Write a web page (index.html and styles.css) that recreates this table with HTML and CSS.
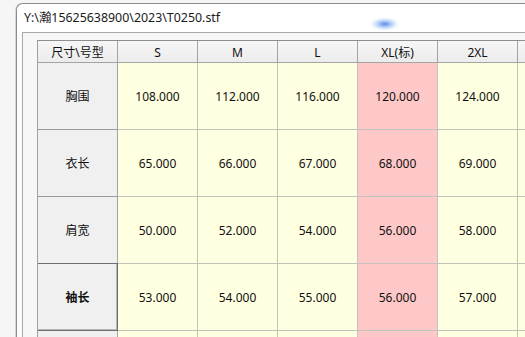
FILE: index.html
```html
<!DOCTYPE html>
<html>
<head>
<meta charset="utf-8">
<link rel="stylesheet" href="styles.css">
</head>
<body>
<div class="desktop">
  <div class="window">
    <div class="titlebar">Y:\瀚15625638900\2023\T0250.stf<span class="glow"></span></div>
    <div class="client">
      <div class="panel">
        <div class="grid">
          <div class="cell hdr corner">尺寸\号型</div>
          <div class="cell hdr">S</div>
          <div class="cell hdr">M</div>
          <div class="cell hdr">L</div>
          <div class="cell hdr">XL(标)</div>
          <div class="cell hdr">2XL</div>
          <div class="cell hdr"></div>

          <div class="cell rowhdr">胸围</div>
          <div class="cell val">108.000</div>
          <div class="cell val">112.000</div>
          <div class="cell val">116.000</div>
          <div class="cell val std">120.000</div>
          <div class="cell val">124.000</div>
          <div class="cell val"></div>

          <div class="cell rowhdr">衣长</div>
          <div class="cell val">65.000</div>
          <div class="cell val">66.000</div>
          <div class="cell val">67.000</div>
          <div class="cell val std">68.000</div>
          <div class="cell val">69.000</div>
          <div class="cell val"></div>

          <div class="cell rowhdr">肩宽</div>
          <div class="cell val">50.000</div>
          <div class="cell val">52.000</div>
          <div class="cell val">54.000</div>
          <div class="cell val std">56.000</div>
          <div class="cell val">58.000</div>
          <div class="cell val"></div>

          <div class="cell rowhdr current">袖长</div>
          <div class="cell val">53.000</div>
          <div class="cell val">54.000</div>
          <div class="cell val">55.000</div>
          <div class="cell val std">56.000</div>
          <div class="cell val">57.000</div>
          <div class="cell val"></div>

          <div class="cell rowhdr"></div>
          <div class="cell val"></div>
          <div class="cell val"></div>
          <div class="cell val"></div>
          <div class="cell val std"></div>
          <div class="cell val"></div>
          <div class="cell val"></div>
        </div>
      </div>
    </div>
  </div>
</div>
</body>
</html>
```
FILE: styles.css
```css
html, body {
  margin: 0;
  padding: 0;
  background: #f6f6f6;
  overflow: hidden;
  font-family: "Noto Sans", "Noto Sans CJK SC", sans-serif;
  font-size: 12px;
  color: #111;
}
.desktop {
  width: 525px;
  height: 337px;
  padding: 3px 0 0 16px;
  box-sizing: border-box;
  overflow: hidden;
}
.window {
  width: 620px;
  height: 400px;
  border: 1px solid #8c8c8c;
  border-right: none;
  border-bottom: none;
  border-radius: 7px 0 0 0;
  background: #fbfbfb;
  box-shadow: -1px 0 0 #d8d8d8;
}
.titlebar {
  position: relative;
  height: 28px;
  line-height: 27px;
  padding-left: 7px;
  background: #ffffff;
  border-radius: 7px 0 0 0;
  font-family: "Noto Sans", "Noto Sans CJK SC", sans-serif;
  font-size: 12.4px;
  color: #1a1a1a;
}
.glow {
  position: absolute;
  left: 352px;
  top: 12px;
  width: 56px;
  height: 16px;
  border-radius: 50%;
  background: radial-gradient(ellipse 28% 45% at 28% 50%, rgba(80,125,235,0.9) 0%, rgba(110,160,240,0.55) 40%, rgba(190,220,250,0.3) 75%, rgba(255,255,255,0) 100%);
}
.client {
  padding-left: 5px;
  background: #fbfbfb;
}
.panel {
  border-top: 1px solid #a8a8a8;
  border-left: 1px solid #a8a8a8;
  background: #f7f7f7;
  padding: 7px 0 0 14px;
  height: 400px;
}
.grid {
  display: grid;
  grid-template-columns: repeat(7, 80px);
  grid-template-rows: 22px repeat(5, 67px);
  border-top: 1px solid #8e8e8e;
  border-left: 1px solid #a0a0a0;
  width: max-content;
}
.cell {
  display: flex;
  align-items: center;
  justify-content: center;
  border-right: 1px solid #c3c3bb;
  border-bottom: 1px solid #c3c3bb;
  white-space: nowrap;
}
.hdr {
  background: linear-gradient(#f6f6f6, #ececec);
  border-right-color: #a4a4a4;
  border-bottom-color: #a4a4a4;
  padding-top: 1px;
}
.rowhdr {
  background: #f0f0f0;
  border-right-color: #a4a4a4;
  border-bottom-color: #9a9a9a;
}
.current {
  font-weight: bold;
  border-right-color: #6e6e6e;
  border-bottom-color: #6e6e6e;
  box-shadow: inset -1px -1px 0 #b8b8b8;
  margin-top: -1px;
  border-top: 1px solid #6e6e6e;
}
.val {
  background: #ffffe2;
}
.std {
  background: #ffc8c8;
}
```
